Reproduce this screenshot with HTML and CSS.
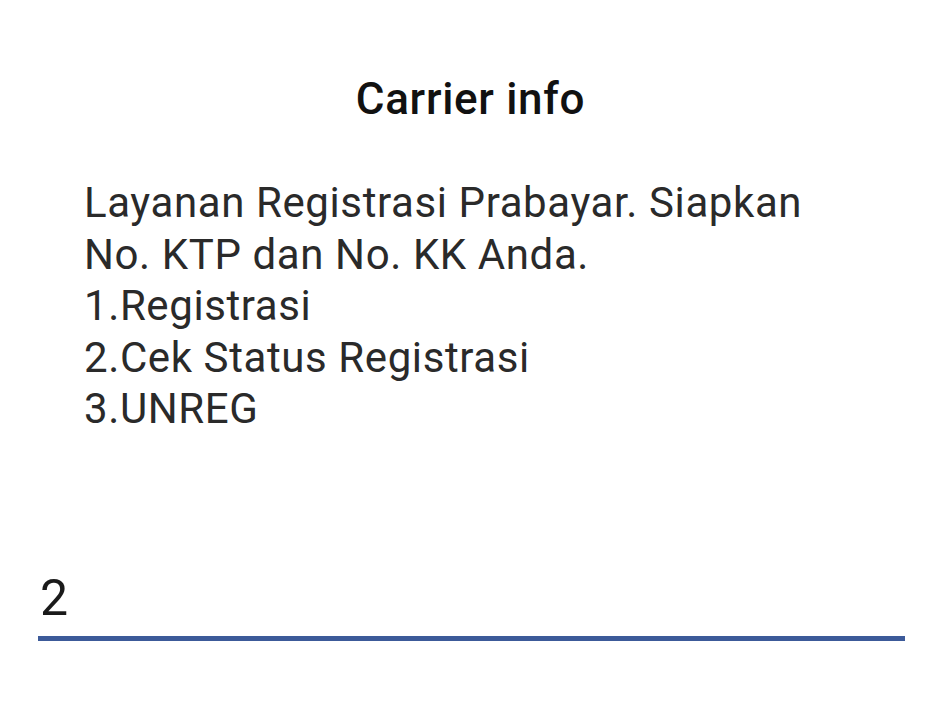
FILE: index.html
```html
<!DOCTYPE html>
<html>
<head>
<meta charset="utf-8">
<link rel="stylesheet" href="styles.css">
</head>
<body>
<div class="dialog">
  <h1 class="title">Carrier info</h1>
  <div class="message">
    <div>Layanan Registrasi Prabayar. Siapkan</div>
    <div>No. KTP dan No. KK Anda.</div>
    <div>1.Registrasi</div>
    <div>2.Cek Status Registrasi</div>
    <div>3.UNREG</div>
  </div>
  <div class="field">
    <div class="value">2</div>
  </div>
</div>
</body>
</html>
```
FILE: styles.css
```css
html, body {
  margin: 0;
  padding: 0;
  background: #ffffff;
}
.dialog {
  width: 941px;
  height: 706px;
  box-sizing: border-box;
  font-family: Roboto, "Liberation Sans", sans-serif;
  color: #1f1f1f;
  display: flex;
  flex-direction: column;
}
.title {
  margin: 0;
  padding-top: 73px;
  text-align: center;
  font-size: 44px;
  font-weight: 500;
  line-height: 52px;
  letter-spacing: 0.7px;
  color: #111111;
}
.message {
  margin-top: 52px;
  padding-left: 84px;
  font-size: 42px;
  line-height: 51.5px;
  letter-spacing: 0.6px;
  color: #2a2a2a;
}
.field {
  margin: 135px 36px 0 38px;
  border-bottom: 5px solid #3c5a99;
}
.value {
  padding-left: 2px;
  font-size: 50px;
  line-height: 56px;
  color: #1a1a1a;
  padding-bottom: 10px;
}
```
